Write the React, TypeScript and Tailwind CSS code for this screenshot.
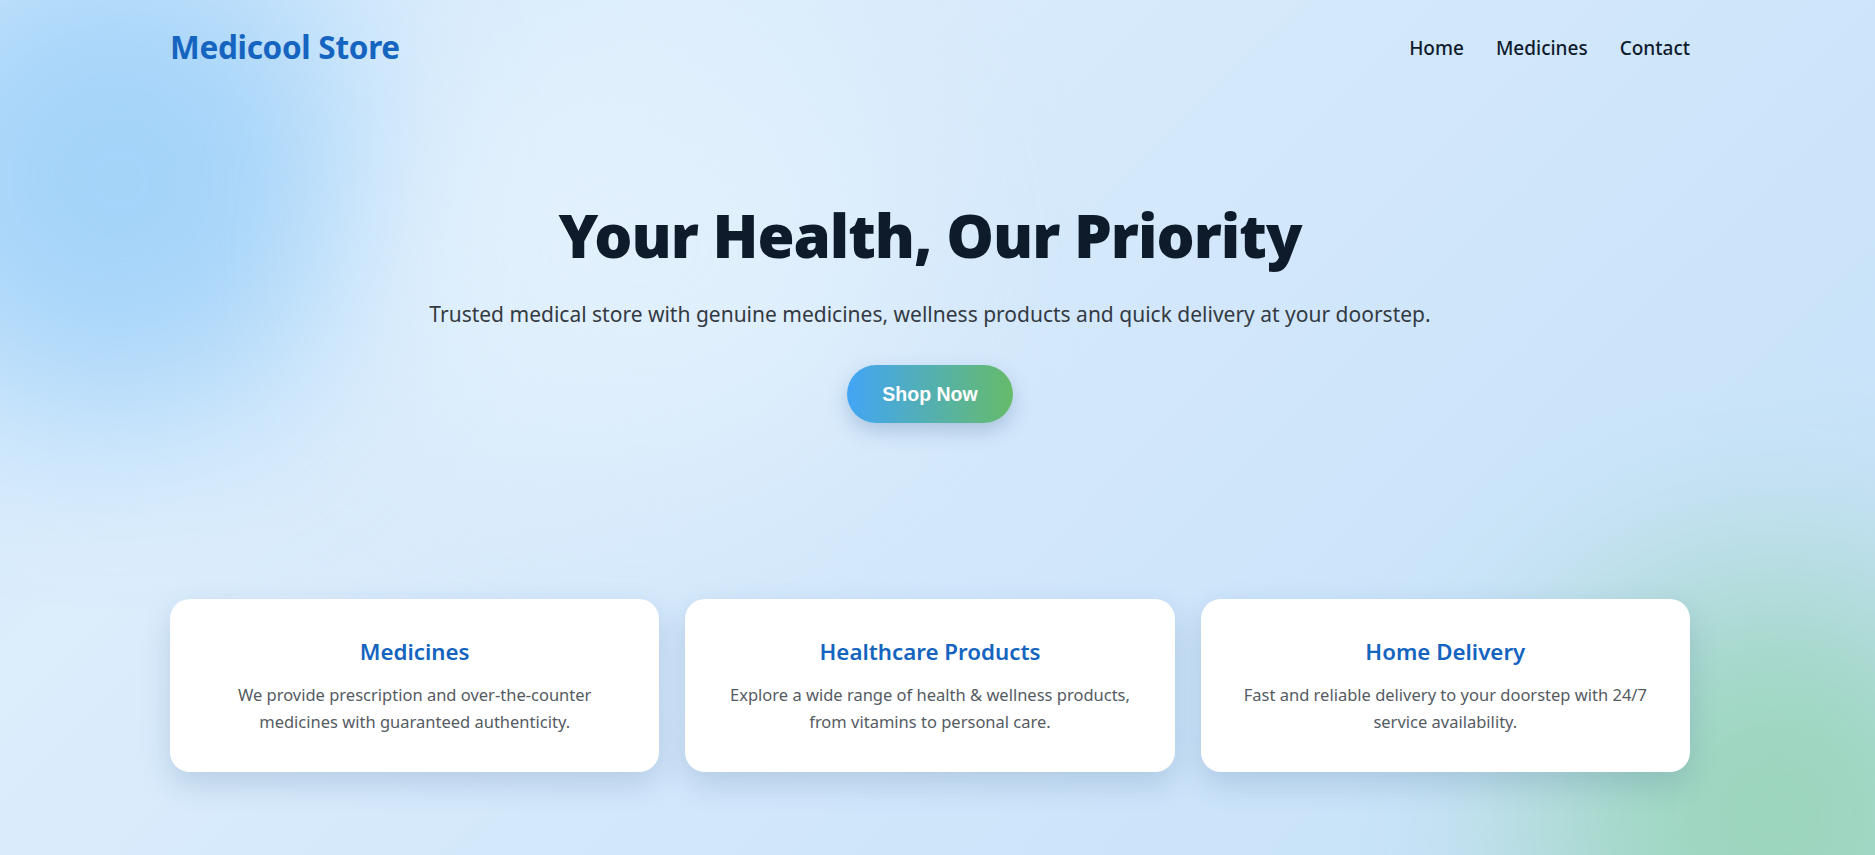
import { ReactNode } from "react";

const features = [
  {
    title: "Medicines",
    text: "We provide prescription and over-the-counter medicines with guaranteed authenticity.",
  },
  {
    title: "Healthcare Products",
    text: "Explore a wide range of health & wellness products, from vitamins to personal care.",
  },
  {
    title: "Home Delivery",
    text: "Fast and reliable delivery to your doorstep with 24/7 service availability.",
  },
];

function NavLink({ children }: { children: ReactNode }) {
  return (
    <a href="#" className="text-[19px] font-medium text-[#0f1b2d] hover:text-[#1565c0]">
      {children}
    </a>
  );
}

function FeatureCard({ title, text }: { title: string; text: string }) {
  return (
    <div className="rounded-[20px] bg-white px-[36px] pt-[38px] pb-[37px] text-center shadow-[0_12px_30px_rgba(40,80,130,0.18)]">
      <h3 className="text-[22.3px] font-semibold leading-[1.3] text-[#1565c0]">{title}</h3>
      <p className="mt-[15px] text-[16.5px] leading-[27px] text-[#555b63]">{text}</p>
    </div>
  );
}

export default function App() {
  return (
    <div className="relative h-[855px] w-full overflow-hidden bg-[linear-gradient(135deg,#d3e9fc_0%,#dcedfc_25%,#d2e7fb_55%,#c3e0f8_100%)] font-['Noto_Sans',sans-serif]">
      {/* background blobs */}
      <div className="pointer-events-none absolute left-[-120px] top-[-60px] h-[480px] w-[480px] rounded-full bg-[#8fcaf8] opacity-70 blur-[90px]"></div>
      <div className="pointer-events-none absolute right-[-140px] bottom-[-200px] h-[480px] w-[480px] rounded-full bg-[#97d4b6] opacity-90 blur-[100px]"></div>
      <div className="pointer-events-none absolute left-[380px] top-[40px] h-[420px] w-[520px] rounded-full bg-[#e6f3fd] opacity-60 blur-[90px]"></div>

      <div className="relative pl-[170px] pr-[185px]">
        {/* Header */}
        <header className="flex items-center justify-between pt-[29px]">
          <h1 className="text-[31.5px] font-bold leading-[1.14] tracking-[-0.3px] text-[#1565c0]">
            Medicool Store
          </h1>
          <nav className="flex items-center gap-[32px] pt-[3px]">
            <NavLink>Home</NavLink>
            <NavLink>Medicines</NavLink>
            <NavLink>Contact</NavLink>
          </nav>
        </header>

        {/* Hero */}
        <section className="flex flex-col items-center pt-[134px] text-center">
          <h2 className="text-[60px] font-black leading-[1.2] tracking-[-1px] text-[#0d1b2a]">
            Your Health, Our Priority
          </h2>
          <p className="mt-[28px] text-[21px] leading-[1.5] text-[#333a42]">
            Trusted medical store with genuine medicines, wellness products and quick delivery at your doorstep.
          </p>
          <button className="mt-[35px] h-[58px] rounded-full bg-[linear-gradient(90deg,#42a5f5,#66bb6a)] px-[35px] font-['Liberation_Sans',sans-serif] text-[19.5px] font-bold text-white shadow-[0_8px_20px_rgba(60,100,150,0.28)]">
            Shop Now
          </button>
        </section>

        {/* Features */}
        <section className="mt-[176px] grid grid-cols-3 gap-[26px]">
          {features.map((f) => (
            <FeatureCard key={f.title} title={f.title} text={f.text} />
          ))}
        </section>
      </div>
    </div>
  );
}
